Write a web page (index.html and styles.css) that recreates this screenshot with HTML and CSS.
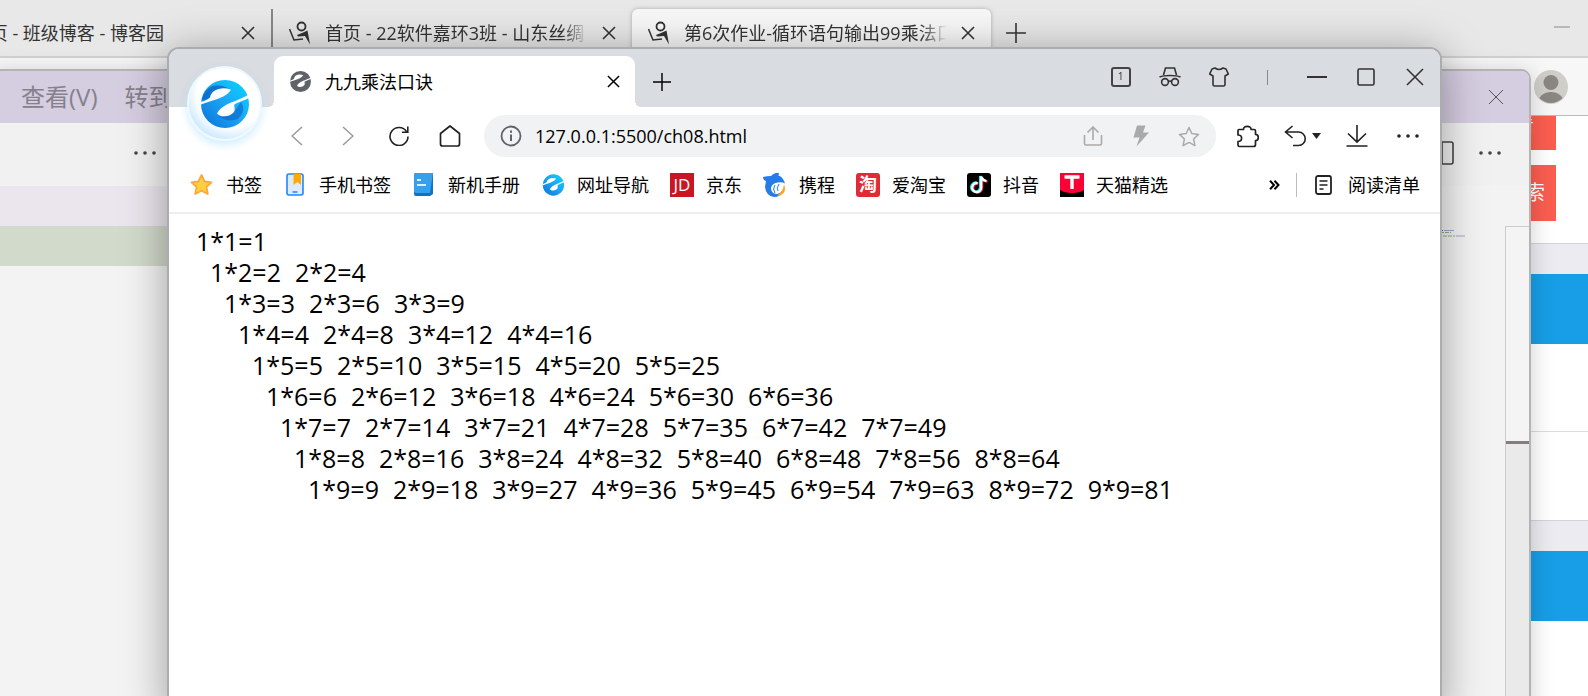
FILE: index.html
```html
<!DOCTYPE html>
<html lang="zh-CN">
<head>
<meta charset="utf-8">
<title>九九乘法口诀</title>
<link rel="stylesheet" href="styles.css">
</head>
<body>
<svg class="defs" aria-hidden="true">
  <defs>
    <linearGradient id="blue" x1="1" y1="0" x2="0" y2="1">
      <stop offset="0" stop-color="#06d8ff"/><stop offset=".5" stop-color="#1ba4f5"/><stop offset="1" stop-color="#0b6fd6"/>
    </linearGradient>
    <symbol id="e-gap" viewBox="0 0 48 48">
      <path d="M-1 25V22C3 21.500 6 20 9 17.500C10 10 20 6 30 9.500C28 14 22 17 15 19.500C9 21.500 4 23 -1 25Z"/>
      <path d="M49 13.500C42 18 36 20 30 22.500C24 25 19 28 16 33.500C20 38 29 37 33 32C35 28 32 26 34 24C40 21.500 45 19.500 49 17.500Z"/>
    </symbol>
    <symbol id="blog" viewBox="0 0 22 24">
      <circle cx="12.500" cy="5.500" r="4" fill="none" stroke="currentColor" stroke-width="1.800"/>
      <path d="M.5 8L5 19L14 18" fill="none" stroke="currentColor" stroke-width="1.500"/>
      <path d="M8 14L13 12L18.500 9.500L21 23.500L16 15L9 15.500Z" fill="currentColor"/>
    </symbol>
    <symbol id="cross" viewBox="0 0 14 14"><path d="M1 1L13 13M13 1L1 13" fill="none" stroke="currentColor" stroke-width="1.600"/></symbol>
    <symbol id="plus" viewBox="0 0 20 20"><path d="M10 0V20M0 10H20" fill="none" stroke="currentColor" stroke-width="1.600"/></symbol>
    <symbol id="dots" viewBox="0 0 24 6"><g fill="currentColor"><circle cx="3" cy="3" r="1.800"/><circle cx="12" cy="3" r="1.800"/><circle cx="21" cy="3" r="1.800"/></g></symbol>
  </defs>
</svg>

<div class="desktop">
  <section class="blog-browser">
    <div class="back-tabs">
      <div class="back-tab first">
        <span class="back-title clipped">页 - 班级博客 - 博客园</span>
        <button class="icon-btn" aria-label="关闭"><svg width="14" height="14"><use href="#cross"/></svg></button>
      </div>
      <div class="back-tab">
        <svg width="22" height="24"><use href="#blog"/></svg>
        <span class="back-title fade">首页 - 22软件嘉环3班 - 山东丝绸</span>
        <button class="icon-btn" aria-label="关闭"><svg width="14" height="14"><use href="#cross"/></svg></button>
      </div>
      <div class="back-tab active">
        <svg width="22" height="24"><use href="#blog"/></svg>
        <span class="back-title fade">第6次作业-循环语句输出99乘法口诀</span>
        <button class="icon-btn" aria-label="关闭"><svg width="14" height="14"><use href="#cross"/></svg></button>
      </div>
      <button class="icon-btn new-tab" aria-label="新标签页"><svg width="20" height="20"><use href="#plus"/></svg></button>
      <button class="icon-btn back-min" aria-label="最小化"><svg width="16" height="2"><path d="M0 1H16" stroke="#888"/></svg></button>
    </div>
    <div class="back-toolbar">
      <svg width="34" height="34" viewBox="0 0 34 34">
        <defs><clipPath id="round"><circle cx="17" cy="17" r="16"/></clipPath></defs>
        <circle cx="17" cy="17" r="17" fill="#d0cec9"/>
        <g fill="#8a8681" clip-path="url(#round)"><circle cx="17" cy="12.500" r="7.500"/><ellipse cx="17" cy="33" rx="13" ry="11"/></g>
      </svg>
    </div>
    <div class="blog-page">
      <div class="blog-search">
        <button class="red">找找看</button>
        <button class="red tall">谷歌搜索</button>
      </div>
      <div class="band"></div><div class="blue-head"></div><div class="card line"></div><div class="card"></div>
      <div class="band"></div><div class="blue-head"></div>
    </div>
  </section>

  <section class="editor">
    <div class="editor-menu">
      <span class="menu-item">查看(V)</span><span class="menu-item">转到</span>
      <button class="icon-btn editor-close" aria-label="关闭"><svg width="16" height="16" viewBox="0 0 16 16"><path d="M1 1L15 15M15 1L1 15" stroke="currentColor"/></svg></button>
    </div>
    <div class="editor-bar">
      <button class="icon-btn side-more" aria-label="更多"><svg width="24" height="6"><use href="#dots"/></svg></button>
      <button class="icon-btn split" aria-label="拆分"><svg width="24" height="24" viewBox="0 0 24 24"><path d="M1 1H21Q23 1 23 3V21Q23 23 21 23H1ZM12 1V23" fill="none" stroke="currentColor" stroke-width="1.600"/></svg></button>
      <button class="icon-btn" aria-label="更多"><svg width="24" height="6"><use href="#dots"/></svg></button>
    </div>
    <div class="editor-main">
      <div class="side"><div class="pink"></div><div class="green"></div></div>
      <svg class="minimap" width="32" height="10" viewBox="0 0 32 10"><path d="M0 1.500H12M0 7H4" stroke="#777" stroke-dasharray="3 1"/><path d="M8 1.500H18M20 7H29" stroke="#9aa8d8"/><path d="M4 3.500H15M7 7H19" stroke="#8fb07f" stroke-dasharray="4 1"/></svg>
      <div class="ruler"><div class="ruler-top"></div></div>
    </div>
  </section>

  <section class="browser">
    <header class="titlebar">
      <div class="tab">
        <svg width="21" height="21" viewBox="0 0 48 48"><circle cx="24" cy="24" r="24" fill="#5f6368"/><use href="#e-gap" width="48" height="48" fill="#fff"/></svg>
        <span class="tab-title">九九乘法口诀</span>
        <button class="icon-btn" aria-label="关闭标签页"><svg width="13" height="13"><use href="#cross"/></svg></button>
      </div>
      <button class="icon-btn add" aria-label="新标签页"><svg width="18" height="18"><use href="#plus"/></svg></button>
      <div class="window-tools">
        <button class="icon-btn count" aria-label="标签页数量"><span class="count-box">1</span></button>
        <button class="icon-btn" aria-label="无痕"><svg width="22" height="20" viewBox="0 0 22 20" fill="none" stroke="currentColor" stroke-width="1.600"><path d="M4.500 8L6.500 1H15.500L17.500 8M.5 10Q4 8.500 11 8.500T21.500 10"/><circle cx="6" cy="15" r="3.400"/><circle cx="16" cy="15" r="3.400"/><path d="M9.400 14.500Q11 13.500 12.600 14.500"/></svg></button>
        <button class="icon-btn" aria-label="皮肤"><svg width="20" height="20" viewBox="0 0 20 20" fill="none" stroke="currentColor" stroke-width="1.600" stroke-linejoin="round"><path d="M6 1Q10 4 14 1L17 2L19.300 7L16 9V17.500Q16 19 14.500 19H5.500Q4 19 4 17.500V9L.7 7L3 2Z"/></svg></button>
        <span class="divide"><i></i></span>
        <button class="icon-btn" aria-label="最小化"><svg width="20" height="2"><path d="M0 1H20" stroke="currentColor" stroke-width="2"/></svg></button>
        <button class="icon-btn" aria-label="最大化"><svg width="18" height="18" viewBox="0 0 18 18"><rect x="1" y="1" width="16" height="16" rx="1.500" fill="none" stroke="currentColor" stroke-width="1.600"/></svg></button>
        <button class="icon-btn" aria-label="关闭"><svg width="18" height="18" viewBox="0 0 18 18"><path d="M1 1L17 17M17 1L1 17" stroke="currentColor" stroke-width="1.600"/></svg></button>
      </div>
    </header>

    <nav class="nav">
      <button class="icon-btn dim" aria-label="后退"><svg width="12" height="20" viewBox="0 0 12 20"><path d="M11 1L1 10L11 19" fill="none" stroke="currentColor" stroke-width="1.500"/></svg></button>
      <button class="icon-btn dim" aria-label="前进"><svg width="12" height="20" viewBox="0 0 12 20"><path d="M1 1L11 10L1 19" fill="none" stroke="currentColor" stroke-width="1.500"/></svg></button>
      <button class="icon-btn" aria-label="刷新"><svg width="20" height="20" viewBox="0 0 20 20" fill="none" stroke="currentColor" stroke-width="1.600"><path d="M19 10.500A9 9 0 1 1 17.500 5.500M18.800 .5V6.200H13"/></svg></button>
      <button class="icon-btn" aria-label="主页"><svg width="22" height="22" viewBox="0 0 22 22"><path d="M1.500 8.500L11 1L20.500 8.500V19Q20.500 21 18.500 21H3.500Q1.500 21 1.500 19Z" fill="none" stroke="currentColor" stroke-width="1.700" stroke-linejoin="round"/></svg></button>
      <div class="omnibox">
        <svg width="22" height="22" viewBox="0 0 22 22"><circle cx="11" cy="11" r="9.500" fill="none" stroke="#5f6368" stroke-width="1.800"/><path d="M11 9.500V16M11 5.500V7.800" stroke="#5f6368" stroke-width="2"/></svg>
        <input class="url" aria-label="地址" value="127.0.0.1:5500/ch08.html">
        <button class="icon-btn" aria-label="分享"><svg width="20" height="20" viewBox="0 0 20 20" fill="none" stroke="currentColor" stroke-width="1.600"><path d="M1.500 9V17.500Q1.500 19 3 19H17Q18.500 19 18.500 17.500V9M10 14V1.500M4.500 6.500L10 1L15.500 6.500"/></svg></button>
        <button class="icon-btn" aria-label="加速"><svg width="18" height="22" viewBox="0 0 18 22"><path d="M5 .5H13.500L11 7.500H17L4.500 21.500L7.500 12.500H1.500Z" fill="currentColor"/></svg></button>
        <button class="icon-btn" aria-label="收藏"><svg width="22" height="21" viewBox="0 0 22 21"><path d="M11 1.500L13.800 7.500L20.500 8.400L15.600 13L16.900 19.600L11 16.400L5.100 19.600L6.400 13L1.500 8.400L8.200 7.500Z" fill="none" stroke="currentColor" stroke-width="1.500" stroke-linejoin="round"/></svg></button>
      </div>
      <div class="nav-right">
        <button class="icon-btn" aria-label="扩展"><svg width="23" height="23" viewBox="0 0 23 23"><path d="M3 4.500H7.500C7 .2 15.500 .2 15 4.500H18Q19.500 4.500 19.500 6V9.300C23.200 9.300 23.200 15.700 19.500 15.700V19.500Q19.500 21.500 17.500 21.500H3.500Q2 21.500 2 20V16.500C6.800 16.500 6.800 10 2 10V5.500Q2 4.500 3 4.500Z" fill="none" stroke="currentColor" stroke-width="1.700" stroke-linejoin="round"/></svg></button>
        <button class="icon-btn undo" aria-label="恢复"><svg width="37" height="22" viewBox="0 0 37 22"><path d="M8.500 1L1.500 7L8.500 13M1.500 7H14.500A6.700 6.700 0 0 1 14.500 20.500H9" fill="none" stroke="currentColor" stroke-width="1.600"/><path d="M28 8H37L32.500 14Z" fill="currentColor"/></svg></button>
        <button class="icon-btn" aria-label="下载"><svg width="22" height="22" viewBox="0 0 22 22"><path d="M11 0V17M2 8.500L11 17.200L20 8.500M.5 21H21.500" fill="none" stroke="currentColor" stroke-width="1.600"/></svg></button>
        <button class="icon-btn" aria-label="更多"><svg width="24" height="6"><use href="#dots"/></svg></button>
      </div>
    </nav>

    <nav class="bookmarks">
      <a class="mark" href="#"><svg width="24" height="24" viewBox="0 0 24 24"><path d="M11.500 2L14.600 8.500L21.500 9.400L16.400 14L17.800 21L11.500 17.700L5.200 21L6.600 14L1.500 9.400L8.400 8.500Z" fill="#ffcf3f" stroke="#fbaa3a" stroke-width="1.800" stroke-linejoin="round"/></svg>书签</a>
      <a class="mark" href="#"><svg width="24" height="24" viewBox="0 0 24 24"><rect x="4" y="1" width="16" height="21" rx="2" fill="#dfeaff" stroke="#1f86ff" stroke-width="1.600"/><path d="M10.500 1H18V12L14.300 9L10.500 12Z" fill="#ffa900"/><path d="M9.500 19H14.500" stroke="#1f86ff" stroke-width="1.500"/></svg>手机书签</a>
      <a class="mark" href="#"><svg width="24" height="24" viewBox="0 0 24 24"><path d="M4 0H21V21L18 23H4Q2 23 2 21V2Q2 0 4 0Z" fill="#1670bd"/><path d="M4 0H21L18 20H4Q2 20 2 18V2Q2 0 4 0Z" fill="#36a0ea"/><path d="M5 7H9M5 12H14" stroke="#d8f0ff" stroke-width="2"/></svg>新机手册</a>
      <a class="mark" href="#"><svg width="24" height="24" viewBox="-4 -3 54 54"><circle cx="24" cy="24" r="24" fill="url(#blue)"/><use href="#e-gap" width="48" height="48" fill="#fff"/></svg>网址导航</a>
      <a class="mark" href="#"><span class="logo jd">JD</span>京东</a>
      <a class="mark" href="#"><svg width="24" height="24" viewBox="0 0 24 24"><path d="M0 4Q4 3 8 3Q12-1 16 0L15.500 2.500Q20 4 22 10.500Q19 8.500 15 9.500Q9 10 8 15Q8 20 13 21Q17 21 19 18Q18 24 11 24Q3 23 2 14L3 8Q0 7 0 4Z" fill="#257be8"/><path d="M14 22Q20 20 21 11Q24 19 18 22Q16 23 14 22Z" fill="#ffa21f"/><path d="M12 20Q9 16 12 12M15 18Q13 15 16 11" stroke="#257be8" fill="none"/></svg>携程</a>
      <a class="mark" href="#"><span class="logo tao">淘</span>爱淘宝</a>
      <a class="mark" href="#"><svg width="24" height="24" viewBox="0 0 24 24"><rect width="24" height="24" rx="3"/><g fill="none" stroke-width="2.600"><path d="M11.500 10.500A4.500 4.500 0 1 0 15 15V4Q16 8 20.500 8.500" stroke="#fe2c55"/><path d="M9.800 9.800A4.500 4.500 0 1 0 13.300 14V3Q14.500 7 18.500 7.500" stroke="#25f4ee"/><path d="M10.700 10.200A4.500 4.500 0 1 0 14.200 14.500V3.500Q15.500 7.500 19.500 8" stroke="#fff" stroke-width="2.200"/></g></svg>抖音</a>
      <a class="mark" href="#"><svg width="24" height="24" viewBox="0 0 24 24"><rect width="24" height="24" fill="#ff0036"/><path d="M0 17L4 19Q12 21 20 19L24 17V24H0Z"/><path d="M4.500 4H19.500M12 4V16" stroke="#fff" stroke-width="3.400"/></svg>天猫精选</a>
      <div class="reading">
        <button class="icon-btn more-marks" aria-label="更多书签"><svg width="11" height="10" viewBox="0 0 11 10"><path d="M1 .8L5 5L1 9.200M5.500 .8L9.500 5L5.500 9.200" fill="none" stroke="currentColor" stroke-width="2"/></svg></button>
        <a class="mark read" href="#"><svg width="17" height="20" viewBox="0 0 17 20" fill="none" stroke="#222" stroke-width="1.800"><rect x="1" y="1" width="15" height="18" rx="2"/><path d="M4.500 6H12.500M4.500 10H12.500M4.500 14H8.500" stroke-width="1.500"/></svg>阅读清单</a>
      </div>
    </nav>

    <main class="page" id="table"></main>

    <div class="brand">
      <svg width="48" height="48" viewBox="0 0 48 48"><defs><clipPath id="disc"><circle cx="24" cy="24" r="24"/></clipPath></defs><circle cx="24" cy="24" r="24" fill="url(#blue)"/><path d="M1 20Q3 9 12 6Q22 4 30 10L18 10Q10 13 9 19Z" fill="#0a63c4" opacity=".75" clip-path="url(#disc)"/><path d="M40 22Q46 30 37 39Q27 43 17 36Q28 38 33 32Z" fill="#0a63c4" opacity=".6" clip-path="url(#disc)"/><use href="#e-gap" width="48" height="48" fill="#f8fcff"/></svg>
    </div>
  </section>
</div>
<script src="table.js"></script>
</body>
</html>
```
FILE: styles.css
```css
* { box-sizing: border-box; }
body { margin: 0; font: 18px/24px "Open Sans", "Noto Sans CJK SC", sans-serif; color: #000; }
button { font: inherit; color: inherit; }
svg { display: block; flex: none; }
.defs { position: absolute; width: 0; height: 0; }
.desktop { position: relative; height: 100vh; overflow: hidden; background: #fff; }
.icon-btn { display: flex; align-items: center; justify-content: center; flex: none; padding: 0; border: 0; background: none; }

/* blog browser at the back */
.back-tabs { display: flex; height: 58px; padding-top: 9px; background: #e8e8e8; border-bottom: 2px solid #d2d2d2; color: #333; }
.back-tab { display: flex; align-items: center; width: 359px; padding: 0 16px; gap: 14px; }
.back-tab.first { width: 273px; border-right: 2px solid #888; padding-left: 0; justify-content: space-between; }
.back-tab.active { background: #f7f7f7; border-radius: 6px 6px 0 0; box-shadow: 0 0 4px #aaa; }
.back-title { flex: 1; overflow: hidden; white-space: nowrap; }
.back-title.clipped { flex: none; display: flex; justify-content: flex-end; width: 164px; }
.fade { mask-image: linear-gradient(to right, #000 90%, transparent); }
.new-tab { width: 50px; }
.back-min { margin-left: auto; width: 52px; height: 36px; }
.back-toolbar { display: flex; justify-content: flex-end; align-items: center; height: 58px; padding-right: 20px; background: #f7f7f7; border-bottom: 1px solid #bbb; }
.blog-search { display: flex; flex-direction: column; align-items: flex-end; gap: 15px; height: 127px; padding-right: 32px; overflow: hidden; }
.red { height: 34px; padding: 0 22px 15px 11px; border: 0; background: #fb5d50; color: #fff; font-size: 20px; line-height: 20px; }
.red.tall { height: 56px; padding: 0 11px; }
.band { height: 31px; background: #ecebf1; border-top: 1px solid #d4d4d8; }
.blue-head { height: 70px; background: #179ee6; }
.card { height: 88px; }
.card.line { border-bottom: 1px solid #ddd; }

/* code editor in the middle */
.editor { position: absolute; top: 69px; right: 57px; bottom: -20px; left: -10px; display: flex; flex-direction: column; border: 2px solid #b4b4b4; border-radius: 10px; background: #f3f3f3; box-shadow: 0 4px 24px rgba(0,0,0,.2); overflow: hidden; }
.editor-menu { display: flex; align-items: center; height: 52px; padding: 0 25px 0 29px; gap: 27px; background: #d5cde0; color: #85808c; font-size: 24px; }
.editor-close { margin-left: auto; color: #555; }
.editor-bar { display: flex; align-items: center; height: 63px; padding: 0 27px 3px 141px; gap: 24px; background: #f1f1f1; color: #444; }
.split { margin-left: auto; }
.editor-main { display: flex; flex: 1; }
.side { flex: 1; min-width: 0; max-width: 400px; }
.pink { height: 40px; background: #ebe6ed; }
.green { height: 40px; background: #d2dacb; }
.minimap { margin: 43px 37px 0 auto; }
.ruler { width: 24px; margin-top: 40px; background: #eaeaea; border-left: 1px solid #ccc; border-top: 1px solid #ccc; }
.ruler-top { height: 217px; background: #f4f4f4; border-bottom: 3px solid #857b80; }

/* front browser */
.browser { position: absolute; top: 47px; right: 146px; bottom: -20px; left: 167px; border: 2px solid #aaacae; border-radius: 12px; background: #fff; box-shadow: 0 6px 44px rgba(0,0,0,.36); }
.titlebar { display: flex; height: 58px; padding: 7px 1px 0 105px; background: #d9dce1; border-radius: 10px 10px 0 0; color: #333; }
.tab { position: relative; display: flex; align-items: center; width: 361px; padding: 0 15px 0 16px; gap: 14px; background: #fff; border-radius: 9px 9px 0 0; color: #000; }
.tab::before, .tab::after { content: ""; position: absolute; bottom: 0; width: 6px; height: 6px; }
.tab::before { left: -6px; background: radial-gradient(circle at 0 0, transparent 6px, #fff 6px); }
.tab::after { right: -6px; background: radial-gradient(circle at 100% 0, transparent 6px, #fff 6px); }
.tab-title { flex: 1; }
.add { width: 54px; color: #000; }
.window-tools { display: flex; height: 42px; margin-left: auto; }
.window-tools > * { display: flex; align-items: center; justify-content: center; width: 49px; }
.divide i { width: 1px; height: 15px; background: #888; }
.count-box { width: 20px; height: 20px; border: 2px solid #444; border-radius: 3px; font-size: 10px; line-height: 15px; }
.nav { display: flex; height: 50px; padding: 8px 7px 0 102px; color: #222; }
.nav > .icon-btn, .nav-right > .icon-btn { width: 51px; }
.nav .dim { color: #999; }
.omnibox { display: flex; flex: 1; align-items: center; min-width: 0; margin-left: 9px; padding: 0 3px 0 16px; background: #f0f2f4; border-radius: 21px; color: #aaa; }
.omnibox .icon-btn { width: 48px; }
.url { flex: 1; min-width: 0; margin-left: 13px; padding: 0; border: 0; outline: 0; background: none; font: inherit; color: #000; }
.nav-right { display: flex; padding-left: 6px; }
.nav-right > .undo { width: 58px; }
.bookmarks { display: flex; align-items: center; height: 57px; padding: 1px 20px 0 21px; gap: 21px; border-bottom: 2px solid #eee; }
.mark { display: flex; align-items: center; flex: none; gap: 12px; color: #000; text-decoration: none; }
.logo { width: 24px; height: 24px; color: #fff; text-align: center; }
.jd { background: #c81623; font: 17px/24px "Open Sans", sans-serif; }
.tao { background: #e02a36; border-radius: 3px; font-weight: 700; line-height: 23px; }
.reading { display: flex; align-items: center; margin-left: auto; gap: 16px; }
.read { gap: 16px; padding-left: 18px; border-left: 1px solid #bbb; }
.page { padding: 12px 0 0 27px; font-size: 25px; line-height: 31px; }
.row { display: flex; gap: 14px; white-space: nowrap; }
.brand { position: absolute; top: 17px; left: 18px; display: flex; align-items: center; justify-content: center; width: 75px; height: 75px; border-radius: 50%; border: 2px solid #eef8ff; background: radial-gradient(circle at 60% 35%, #fff 55%, #cfeaff 75%); box-shadow: 0 4px 8px rgba(150,215,255,.45); }
```
FILE: table.js
```js
const page = document.getElementById('table');
for (let i = 1; i <= 9; i++) {
  const row = document.createElement('div');
  row.className = 'row';
  row.style.paddingLeft = (i - 1) * 14 + 'px';
  for (let j = 1; j <= i; j++) {
    const cell = document.createElement('span');
    cell.textContent = `${j}*${i}=${i * j}`;
    row.append(cell);
  }
  page.append(row);
}
```
